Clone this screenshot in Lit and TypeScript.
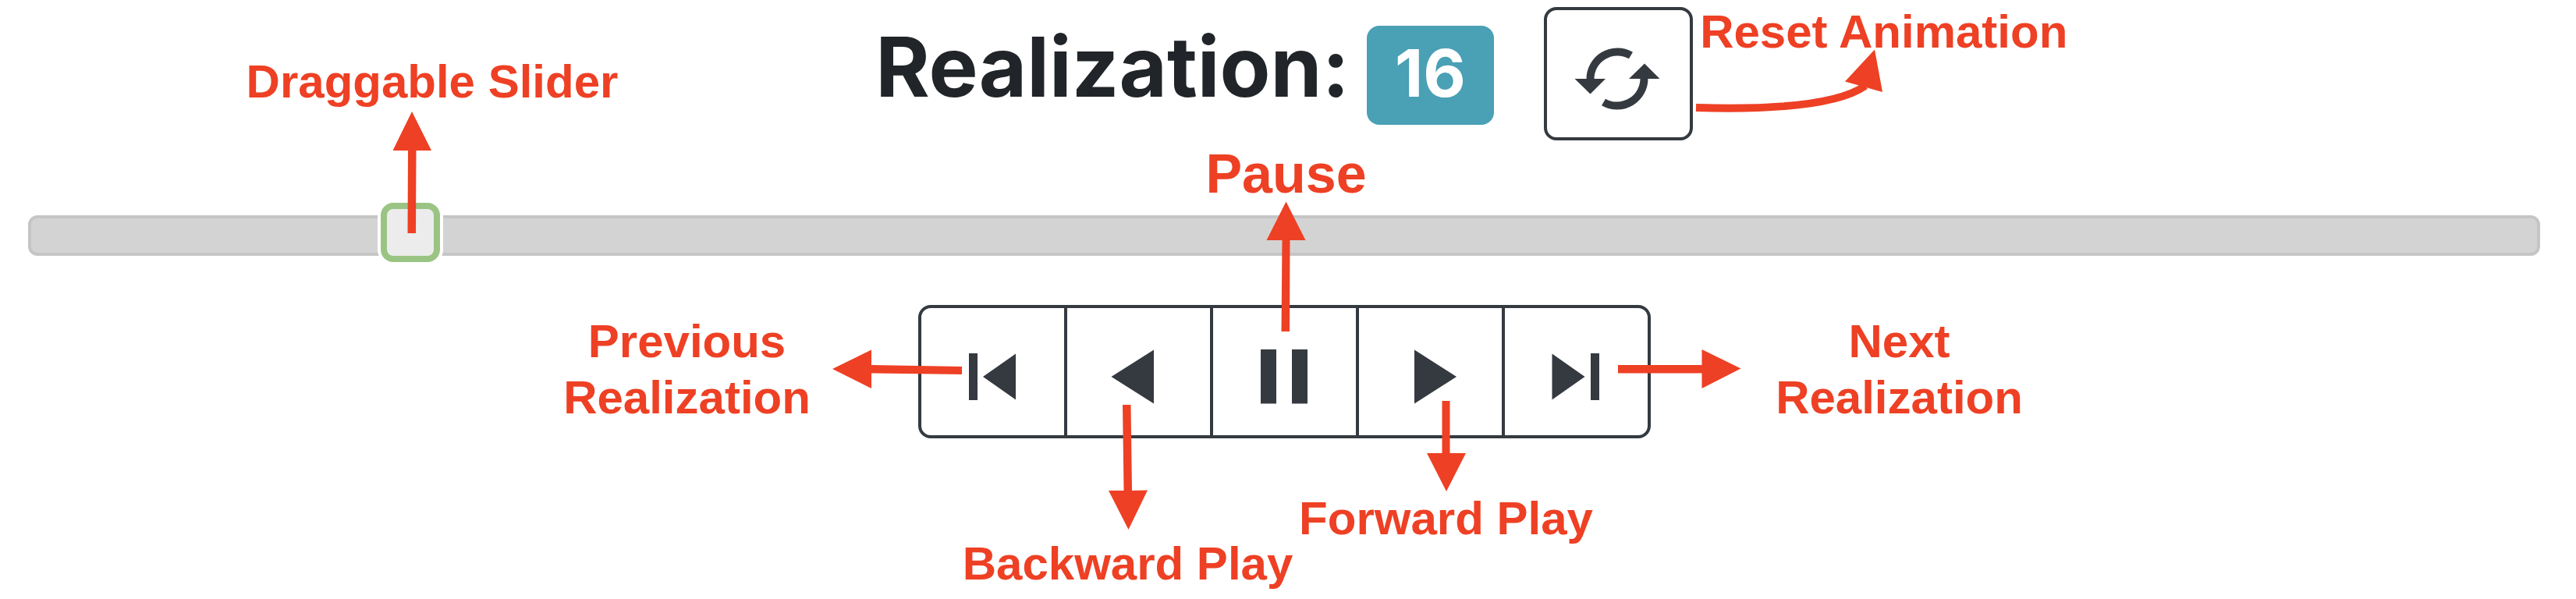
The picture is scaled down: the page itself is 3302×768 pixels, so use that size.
import { LitElement, html, svg, css, nothing, type SVGTemplateResult } from "lit";
import { customElement, property, state } from "lit/decorators.js";

const MIN = 1;
const MAX = 106;

/* Arrow and caption pinned to the control that contains it. */
@customElement("call-out")
export class CallOut extends LitElement {
  @property() name = "";

  static styles = css`
    :host {
      position: absolute;
      top: 0;
      left: 0;
      z-index: 1;
      pointer-events: none;
      color: #ee4024;
      font: bold 60px/72px "Liberation Sans", Arial, sans-serif;
      text-align: center;
      white-space: nowrap;
    }
    .arrow {
      position: absolute;
      top: 0;
      left: 0;
      width: 1px;
      height: 1px;
      overflow: visible;
      fill: currentColor;
    }
    .stroke {
      fill: none;
      stroke: currentColor;
      stroke-width: 10;
    }
    .text {
      position: absolute;
      transform: translateX(-50%);
    }
    .slider { left: 66px; top: -191px; }
    .reset { left: 436px; top: -4px; }
    .previous { left: -296px; top: 11px; }
    .next { left: 510px; top: 11px; }
    .backward { left: 82px; top: 296px; }
    .forward { left: 116px; top: 238px; }
    .pause { left: 98px; top: -210px; font-size: 70px; line-height: 84px; }
  `;

  private arrows: Record<string, SVGTemplateResult> = {
    slider: svg`<path d="M40-117L65-67H45.500L45 39H34.500L35-67H15.500Z"/>`,
    reset: svg`<path class="stroke" d="M195 129Q365 134 412 101"/><path d="M424 54.500L386 95.500L434 109Z"/>`,
    previous: svg`<path d="M-110 82L-60 57.500V77L56 79V89L-60 87.500V107Z"/>`,
    next: svg`<path d="M306.500 81.500L256.500 57V77H149V87.500H256.500V107Z"/>`,
    backward: svg`<path d="M82.500 288L57 238H76.500L75 128H85.500L87 238L107 237.500Z"/>`,
    forward: svg`<path d="M116 239L91 190H110.500V123H120.500V190H141Z"/>`,
    pause: svg`<path d="M97.500-132.500L122.500-83H102.500L102 34H91.500L92.500-83H72.500Z"/>`,
  };

  render() {
    return html`
      <svg class="arrow" aria-hidden="true">${this.arrows[this.name] ?? nothing}</svg>
      <span class="text ${this.name}"><slot></slot></span>
    `;
  }
}

@customElement("app-root")
export class AppRoot extends LitElement {
  @state() private value = 16;
  private timer = 0;

  static styles = css`
    :host {
      display: block;
      background: #fff;
      color: #212529;
      font-family: Inter, sans-serif;
    }
    .page {
      display: flex;
      flex-direction: column;
      padding: 9px 46px 206px 36px;
    }
    .head {
      display: flex;
      justify-content: center;
      align-items: flex-start;
      gap: 64px;
    }
    .title {
      display: flex;
      align-items: baseline;
      gap: 22px;
      margin: 13px 0 0;
      font-size: 106px;
      font-weight: 700;
      line-height: 128px;
    }
    .badge {
      padding: 20px 36px 25px;
      border-radius: 16px;
      background: #4aa0b5;
      color: #fff;
      font-size: 84px;
      line-height: 82px;
    }
    .cell {
      position: relative;
    }
    .btn {
      box-sizing: border-box;
      display: flex;
      align-items: center;
      justify-content: center;
      width: 191px;
      height: 171px;
      margin: 0;
      padding: 12px 0 0;
      border: 4px solid #343a40;
      border-radius: 0;
      background: #fff;
      color: #343a40;
    }
    .cell:first-child .btn {
      border-top-left-radius: 16px;
      border-bottom-left-radius: 16px;
    }
    .cell:last-child .btn {
      border-top-right-radius: 16px;
      border-bottom-right-radius: 16px;
    }
    .head .cell .btn {
      border-radius: 16px;
    }
    .icon {
      width: 80px;
      height: 80px;
      fill: currentColor;
    }
    .icon.wide {
      width: 120px;
    }
    .ring {
      fill: none;
      stroke: currentColor;
      stroke-width: 10;
    }
    .slider {
      position: relative;
      margin-top: 80px;
    }
    .range {
      -webkit-appearance: none;
      appearance: none;
      display: block;
      width: 100%;
      height: 84px;
      margin: 0;
      background: none;
    }
    .range::-webkit-slider-runnable-track {
      box-sizing: border-box;
      height: 52px;
      border: 4px solid #c5c5c5;
      border-radius: 12px;
      background: #d3d3d3;
    }
    .range::-webkit-slider-thumb {
      -webkit-appearance: none;
      box-sizing: border-box;
      width: 76px;
      height: 76px;
      margin-top: -20px;
      border: 8px solid #9ac483;
      border-radius: 16px;
      background: #ececec;
      box-shadow: 0 0 0 4px #fff;
    }
    .pin {
      position: absolute;
      top: 0;
    }
    .controls {
      display: flex;
      justify-content: center;
      margin-top: 47px;
    }
    .controls .cell + .cell {
      margin-left: -4px;
    }
  `;

  private go(step: number) {
    this.value = Math.min(MAX, Math.max(MIN, this.value + step));
  }

  private pause() {
    window.clearInterval(this.timer);
  }

  private play(step: number) {
    this.pause();
    this.timer = window.setInterval(() => this.go(step), 500);
  }

  private reset() {
    this.pause();
    this.value = MIN;
  }

  disconnectedCallback() {
    super.disconnectedCallback();
    this.pause();
  }

  private control(label: string, name: string, icon: SVGTemplateResult, run: () => void, text: unknown) {
    return html`
      <div class="cell">
        <button class="btn" type="button" aria-label=${label} @click=${run}>
          <svg class="icon" viewBox="0 0 80 80" aria-hidden="true">${icon}</svg>
        </button>
        <call-out name=${name}>${text}</call-out>
      </div>
    `;
  }

  render() {
    const share = (this.value - MIN) / (MAX - MIN);
    return html`
      <main class="page">
        <header class="head">
          <h1 class="title">Realization: <span class="badge">${this.value}</span></h1>
          <div class="cell">
            <button class="btn" type="button" aria-label="Reset Animation" @click=${this.reset}>
              <svg class="icon wide" viewBox="0 0 120 80" aria-hidden="true">
                <path class="ring" d="M24.500 41A34.800 34.800 0 0 1 76.500 10" />
                <path class="ring" d="M93.500 39A34.800 34.800 0 0 1 41.500 70" />
                <path d="M4.500 40H44L24.500 59.500ZM74 40H113.500L94 20.500Z" />
              </svg>
            </button>
            <call-out name="reset">Reset Animation</call-out>
          </div>
        </header>

        <div class="slider">
          <input
            class="range"
            type="range"
            aria-label="Realization"
            min=${MIN}
            max=${MAX}
            .value=${String(this.value)}
            @input=${(e: Event) => (this.value = Number((e.target as HTMLInputElement).value))}
          />
          <div class="pin" style="left: calc(4px + (100% - 84px) * ${share})">
            <call-out name="slider">Draggable Slider</call-out>
          </div>
        </div>

        <div class="controls" role="group" aria-label="Playback">
          ${this.control("Previous Realization", "previous",
            svg`<path d="M10 10H21V70H10ZM70 10.500V69.500L28 40Z"/>`,
            () => this.go(-1), html`Previous<br />Realization`)}
          ${this.control("Backward Play", "backward",
            svg`<path d="M60 5.500V74.500L5.500 40Z"/>`,
            () => this.play(-1), "Backward Play")}
          ${this.control("Pause", "pause",
            svg`<path d="M10 5H30V74.500H10ZM50 5H70V74.500H50Z"/>`,
            () => this.pause(), "Pause")}
          ${this.control("Forward Play", "forward",
            svg`<path d="M20 5.500V74.500L74 40Z"/>`,
            () => this.play(1), "Forward Play")}
          ${this.control("Next Realization", "next",
            svg`<path d="M9.500 10.500V69.500L51.500 40ZM59 10H70V70H59Z"/>`,
            () => this.go(1), html`Next<br />Realization`)}
        </div>
      </main>
    `;
  }
}
